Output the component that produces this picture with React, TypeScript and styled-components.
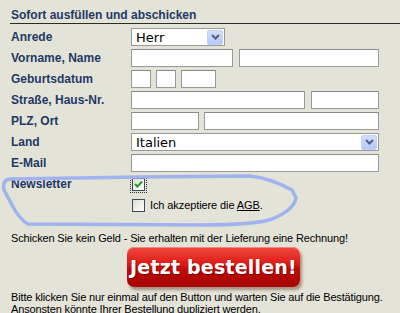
import React from "react";
import styled, { createGlobalStyle } from "styled-components";

const GlobalStyle = createGlobalStyle`
    html, body {
        margin: 0;
        padding: 0;
        background: #e4e3d7;
    }
    body {
        font-family: "Liberation Sans", Arial, sans-serif;
    }
`;

const Page = styled.div`
    position: relative;
    width: 400px;
    height: 313px;
    overflow: hidden;
    padding: 8px 0 0 11px;
    box-sizing: border-box;
`;

const Title = styled.div`
    font-size: 12px;
    font-weight: bold;
    color: #1d3a66;
    line-height: 14px;
    height: 14px;
    padding-bottom: 1px;
    margin-left: -1px;
    padding-left: 1px;
    margin-right: -20px;
    border-bottom: 1px solid #2b2b2b;
`;

const Form = styled.div`
    display: grid;
    grid-template-columns: 120px 1fr;
    grid-auto-rows: 18px;
    row-gap: 3px;
    margin-top: 4px;
`;

const Label = styled.div`
    font-size: 12px;
    font-weight: bold;
    color: #1d3a66;
    display: flex;
    align-items: center;
`;

const Fields = styled.div<{ $gap?: number }>`
    display: flex;
    gap: ${(p) => p.$gap ?? 5}px;
    align-items: center;
`;

const Input = styled.div<{ $w: number }>`
    width: ${(p) => p.$w}px;
    height: 18px;
    box-sizing: border-box;
    background: #fff;
    border: 1px solid #9a9a9a;
    border-top-color: #8a8a8a;
`;

const Select = styled.div<{ $w: number }>`
    width: ${(p) => p.$w}px;
    height: 18px;
    box-sizing: border-box;
    background: #fff;
    border: 1px solid #9a9a9a;
    display: flex;
    align-items: center;
    justify-content: space-between;
    padding: 0 1px 0 4px;
    font-family: "DejaVu Sans", Verdana, sans-serif;
    font-size: 13px;
    color: #000;
`;

const ArrowButton = styled.span`
    width: 16px;
    height: 15px;
    border-radius: 2px;
    background: linear-gradient(#d2defc, #b5c8f7);
    border: 1px solid #c3d1f6;
    box-sizing: border-box;
    display: flex;
    align-items: center;
    justify-content: center;
`;

const CheckRow = styled.div`
    display: flex;
    align-items: center;
    gap: 5px;
    padding-left: 1px;
    font-size: 11px;
    letter-spacing: -0.1px;
    color: #000;
    a {
        color: #000;
        text-decoration: underline;
    }
`;

const Box = styled.span<{ $focus?: boolean }>`
    width: 13px;
    height: 13px;
    box-sizing: border-box;
    border: 1px solid #3c4a5a;
    background: linear-gradient(135deg, #dcdcd4, #ffffff);
    display: flex;
    align-items: center;
    justify-content: center;
    outline: ${(p) => (p.$focus ? "1px dotted #333" : "none")};
    outline-offset: 1px;
`;

const Note = styled.p<{ $top?: number }>`
    margin: ${(p) => p.$top ?? 0}px 0 0;
    font-size: 11px;
    line-height: 12px;
    letter-spacing: -0.15px;
    color: #000;
`;

const ButtonWrap = styled.div`
    display: flex;
    padding-left: 116px;
    margin: 3px 0 4px;
`;

const OrderButton = styled.div`
    width: 173px;
    height: 40px;
    border-radius: 7px;
    box-sizing: border-box;
    background: linear-gradient(#f0493f 0%, #dc1812 45%, #c10b07 55%, #a50403 100%);
    box-shadow: 2px 3px 3px rgba(90, 40, 20, 0.45),
        inset 0 1px 0 rgba(255, 160, 150, 0.7);
    display: flex;
    align-items: center;
    justify-content: center;
    font-family: "DejaVu Sans", Verdana, sans-serif;
    font-weight: bold;
    font-size: 19px;
    color: #fff;
    text-shadow: 1px 1px 1px rgba(80, 0, 0, 0.6);
    letter-spacing: 0.2px;
`;

const Loop = styled.svg`
    position: absolute;
    left: 0;
    top: 0;
    pointer-events: none;
`;

const Chevron = () => (
    <svg width="9" height="6" viewBox="0 0 9 6">
        <path d="M1 1 L4.5 4.5 L8 1" fill="none" stroke="#4d5f86" strokeWidth="2" />
    </svg>
);

const Check = () => (
    <svg width="9" height="8" viewBox="0 0 9 8">
        <path d="M1 4 L3.5 6.5 L8 1.5" fill="none" stroke="#2a9a24" strokeWidth="2" />
    </svg>
);

export default function App() {
    return (
        <>
            <GlobalStyle />
            <Page>
                <Title>Sofort ausfüllen und abschicken</Title>
                <Form>
                    <Label>Anrede</Label>
                    <Fields>
                        <Select $w={94}>
                            <span>Herr</span>
                            <ArrowButton>
                                <Chevron />
                            </ArrowButton>
                        </Select>
                    </Fields>

                    <Label>Vorname, Name</Label>
                    <Fields $gap={6}>
                        <Input $w={102} />
                        <Input $w={140} />
                    </Fields>

                    <Label>Geburtsdatum</Label>
                    <Fields>
                        <Input $w={20} />
                        <Input $w={20} />
                        <Input $w={35} />
                    </Fields>

                    <Label>Straße, Haus-Nr.</Label>
                    <Fields $gap={6}>
                        <Input $w={174} />
                        <Input $w={68} />
                    </Fields>

                    <Label>PLZ, Ort</Label>
                    <Fields>
                        <Input $w={68} />
                        <Input $w={175} />
                    </Fields>

                    <Label>Land</Label>
                    <Fields>
                        <Select $w={248}>
                            <span>Italien</span>
                            <ArrowButton>
                                <Chevron />
                            </ArrowButton>
                        </Select>
                    </Fields>

                    <Label>E-Mail</Label>
                    <Fields>
                        <Input $w={248} />
                    </Fields>

                    <Label>Newsletter</Label>
                    <CheckRow>
                        <Box $focus>
                            <Check />
                        </Box>
                    </CheckRow>

                    <div />
                    <CheckRow>
                        <Box />
                        <span>
                            Ich akzeptiere die <a>AGB</a>.
                        </span>
                    </CheckRow>
                </Form>

                <Note $top={18}>
                    Schicken Sie kein Geld - Sie erhalten mit der Lieferung eine Rechnung!
                </Note>
                <ButtonWrap>
                    <OrderButton>Jetzt bestellen!</OrderButton>
                </ButtonWrap>
                <Note>
                    Bitte klicken Sie nur einmal auf den Button und warten Sie auf die Bestätigung.
                    <br />
                    Ansonsten könnte Ihrer Bestellung dupliziert werden.
                </Note>

                <Loop width="400" height="313" viewBox="0 0 400 313">
                    <path
                        d="M140 177 L250 176 Q270 178 292 190 L296 198 Q294 210 272 219 Q255 225 200 225 L28 224 Q20 220 12 205 L4 190 Q2 180 10 179 Z"
                        fill="none"
                        stroke="#a0b3ef"
                        strokeWidth="3.5"
                        strokeLinejoin="round"
                    />
                </Loop>
            </Page>
        </>
    );
}
